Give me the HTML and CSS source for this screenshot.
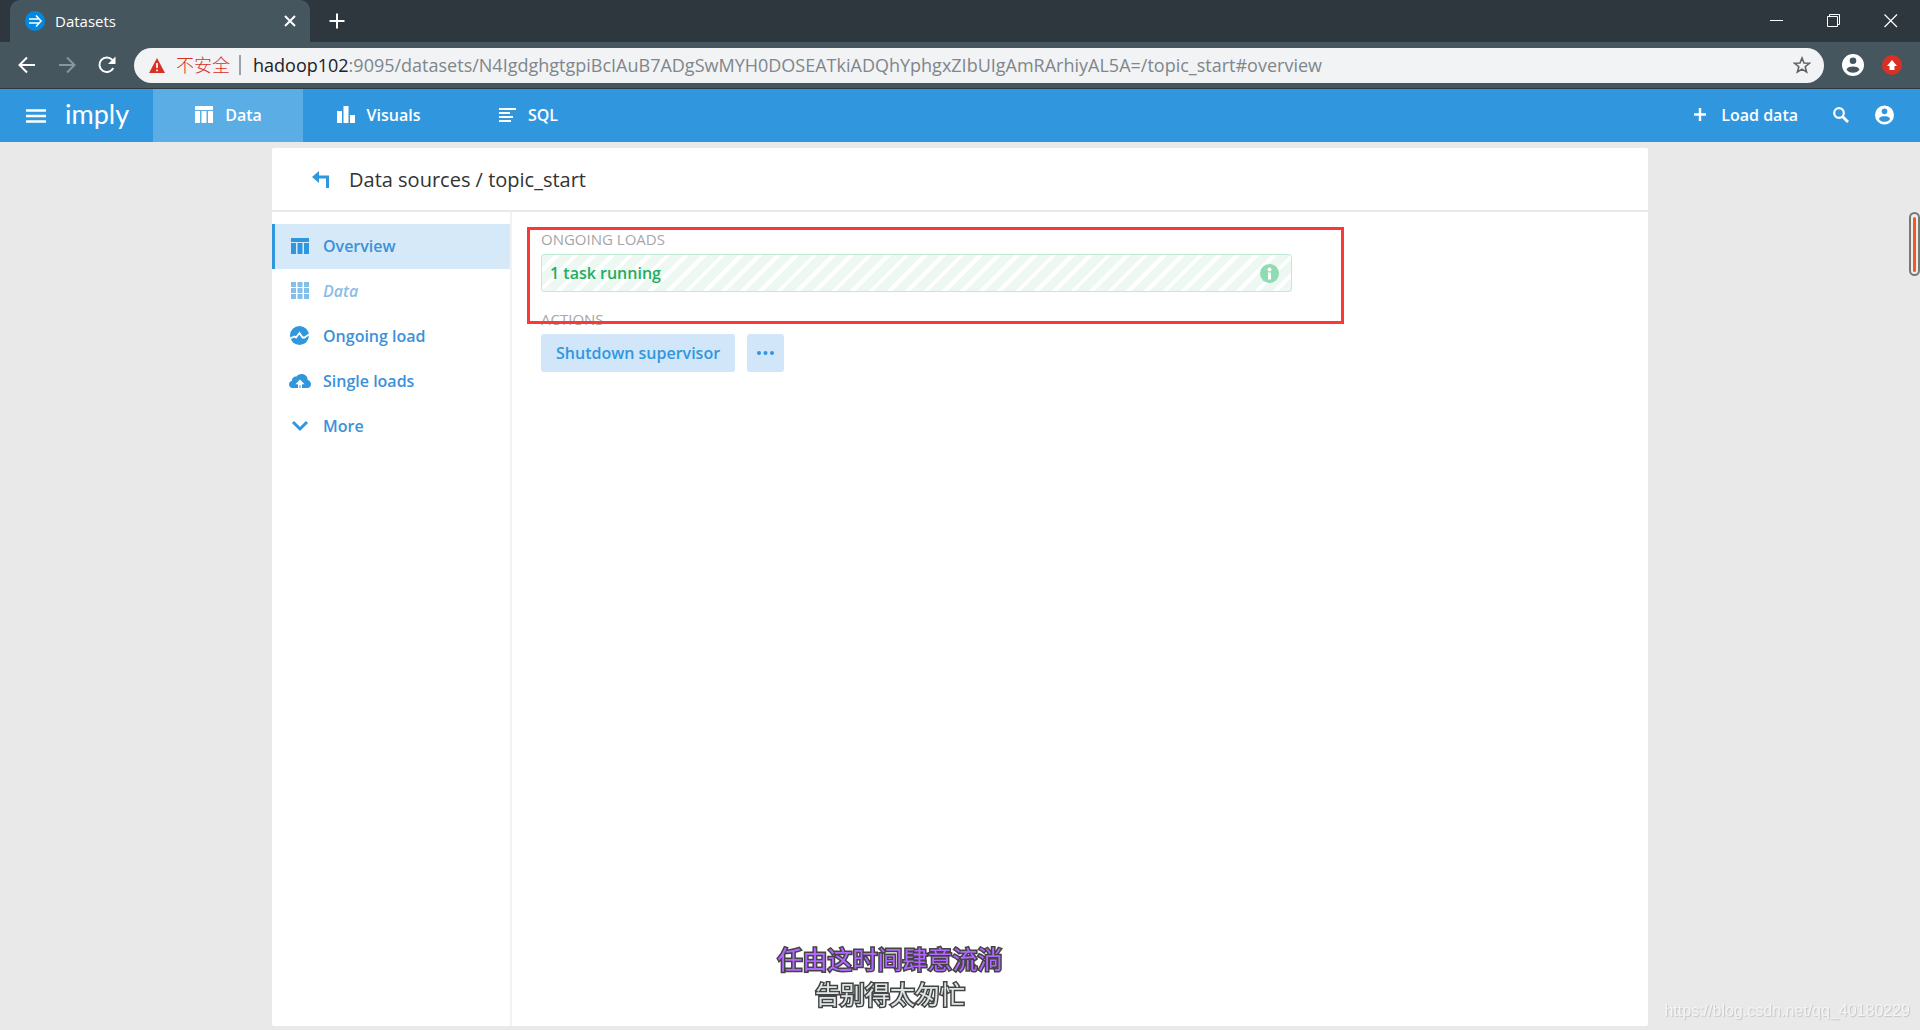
FILE: index.html
```html
<!DOCTYPE html>
<html lang="en">
<head>
<meta charset="utf-8">
<meta name="viewport" content="width=device-width, initial-scale=1">
<title>Datasets</title>
<link rel="stylesheet" href="styles.css">
</head>
<body>
<div class="browser">
  <div class="tab-strip">
    <div class="tab">
      <svg class="favicon" viewBox="0 0 20 20"><circle cx="10" cy="10" r="10" fill="#0288e0"/><path d="M4 8h10M4 12h10M11 4.500l5 5.500-5 5.500" fill="none" stroke="#fff" stroke-width="1.600"/></svg>
      <span class="tab-title">Datasets</span>
      <button class="plain tab-close" aria-label="Close tab"><svg width="12" height="12" viewBox="0 0 12 12"><path d="M1 1l10 10M11 1L1 11" stroke="#fff" stroke-width="2"/></svg></button>
    </div>
    <button class="plain new-tab" aria-label="New tab"><svg width="16" height="16" viewBox="0 0 16 16"><path d="M8 0.500v15M0.500 8h15" stroke="#fff" stroke-width="2"/></svg></button>
    <div class="window-controls">
      <button class="plain" aria-label="Minimize"><svg width="14" height="14" viewBox="0 0 14 14"><path d="M0 6.500h13" stroke="#fff"/></svg></button>
      <button class="plain" aria-label="Restore"><svg width="14" height="14" viewBox="0 0 14 14" fill="none" stroke="#fff"><path d="M.5 2.500h10v10H.5zM2.500 2.500v-2h10v10h-2"/></svg></button>
      <button class="plain" aria-label="Close"><svg width="14" height="14" viewBox="0 0 14 14"><path d="M.5 .5l12.500 12.500M13 .5L.5 13" stroke="#fff" stroke-width="1.200"/></svg></button>
    </div>
  </div>
  <div class="toolbar">
    <div class="history">
      <button class="plain" aria-label="Back"><svg width="18" height="18" viewBox="0 0 18 18"><path d="M17 9H2M9 1.500L1.500 9 9 16.500" fill="none" stroke="#fff" stroke-width="2"/></svg></button>
      <button class="plain" aria-label="Forward"><svg width="18" height="18" viewBox="0 0 18 18"><path d="M1 9h15M9 1.500L16.500 9 9 16.500" fill="none" stroke="#8a969c" stroke-width="2"/></svg></button>
      <button class="plain" aria-label="Reload"><svg width="18" height="18" viewBox="0 0 18 18"><path d="M15.300 12A7.300 7.300 0 1 1 14.300 3.900L16 5.500" fill="none" stroke="#fff" stroke-width="2"/><path d="M17.500 0.500V8H10z" fill="#fff"/></svg></button>
    </div>
    <form class="address">
      <svg width="16" height="15" viewBox="0 0 16 15"><path d="M8 0l8 15H0z" fill="#d93025"/><path d="M8 5v5M8 11.500v1.800" stroke="#fff" stroke-width="1.700"/></svg>
      <span class="insecure">不安全</span>
      <label class="host" for="url">hadoop102</label>
      <input class="url" id="url" type="text" value=":9095/datasets/N4IgdghgtgpiBcIAuB7ADgSwMYH0DOSEATkiADQhYphgxZIbUIgAmRArhiyAL5A=/topic_start#overview">
      <button type="button" class="plain" aria-label="Bookmark"><svg width="18" height="18" viewBox="0 0 18 18"><path d="M9 2l2 5 5.300.3-4.100 3.400 1.400 5.300L9 13.100 4.400 16l1.400-5.300L1.700 7.300 7 7z" fill="none" stroke="#5f6368" stroke-width="1.600"/></svg></button>
    </form>
    <button class="plain" aria-label="Profile"><svg class="icon-profile" viewBox="0 0 22 22"><path fill="#fff" fill-rule="evenodd" d="M11 0a11 11 0 1 1 0 22 11 11 0 0 1 0-22zm0 3.500a3.300 3.300 0 1 0 0 6.600 3.300 3.300 0 0 0 0-6.600zM4.500 15.500c1.500 2.300 3.800 3.300 6.500 3.300s5-1 6.500-3.300c-1-2.400-3.800-3-6.500-3s-5.500.6-6.500 3z"/></svg></button>
    <button class="plain" aria-label="Update available"><svg width="20" height="20" viewBox="0 0 20 20"><circle cx="10" cy="10" r="10" fill="#d93025"/><path d="M10 5l5 6h-2.500v4h-5v-4H5z" fill="#fff"/></svg></button>
  </div>
</div>

<header class="app-bar">
  <button class="plain menu" aria-label="Menu"><svg width="20" height="14" viewBox="0 0 20 14"><path d="M0 1.500h20M0 7h20M0 12.500h20" stroke="#fff" stroke-width="2.500"/></svg></button>
  <a class="logo" href="#">imply</a>
  <nav class="app-tabs">
    <a class="app-tab app-tab-active" href="#"><svg width="18" height="17" viewBox="0 0 18 17" fill="#fff"><path d="M0 0h18v4H0zM0 5h5v12H0zM6.500 5h5v12h-5zM13 5h5v12h-5z"/></svg>Data</a>
    <a class="app-tab" href="#"><svg width="18" height="17" viewBox="0 0 18 17" fill="#fff"><path d="M0 5h5v12H0zM6.500 0h5v17h-5zM13 9h5v8h-5z"/></svg>Visuals</a>
    <a class="app-tab" href="#"><svg width="17" height="14" viewBox="0 0 17 14"><path d="M0 1h17M0 5h11M0 9h14M0 13h12" stroke="#fff" stroke-width="2"/></svg>SQL</a>
  </nav>
  <div class="app-actions">
    <button class="plain load"><svg width="12" height="13" viewBox="0 0 12 13"><path d="M6 0v13M0 6.500h12" stroke="#fff" stroke-width="2.400"/></svg>Load data</button>
    <button class="plain" aria-label="Search"><svg width="16" height="16" viewBox="0 0 16 16" fill="none" stroke="#fff"><circle cx="6" cy="6" r="4.800" stroke-width="2.200"/><path d="M9.500 9.500l5.500 5.500" stroke-width="2.800"/></svg></button>
    <button class="plain" aria-label="Account"><svg width="19" height="20" viewBox="0 0 22 22"><path fill="#fff" fill-rule="evenodd" d="M11 0a11 11 0 1 1 0 22 11 11 0 0 1 0-22zm0 3.500a3.300 3.300 0 1 0 0 6.600 3.300 3.300 0 0 0 0-6.600zM4.500 15.500c1.500 2.300 3.800 3.300 6.500 3.300s5-1 6.500-3.300c-1-2.400-3.800-3-6.500-3s-5.500.6-6.500 3z"/></svg></button>
  </div>
</header>

<div class="card">
  <div class="card-head">
    <a class="back" href="#" aria-label="Back to data sources"><svg width="18" height="17" viewBox="0 0 18 17"><path d="M7 0v12L0 6z" fill="#3097df"/><path d="M5 6h10.500v11" fill="none" stroke="#3097df" stroke-width="3"/></svg></a>
    <h1 class="title">Data sources / topic_start</h1>
  </div>
  <div class="card-body">
    <nav class="side">
      <a class="side-item side-active" href="#overview"><span class="side-icon"><svg width="18" height="16" viewBox="0 0 18 16" fill="#3097df"><path d="M0 0h18v4H0zM0 5h5v11H0zM6.500 5h5v11h-5zM13 5h5v11h-5z"/></svg></span>Overview</a>
      <a class="side-item side-muted" href="#data"><span class="side-icon"><svg width="18" height="17" viewBox="0 0 18 17" fill="#3097df"><path d="M0 0h5v5H0zM6.500 0h5v5h-5zM13 0h5v5h-5zM0 6h5v5H0zM6.500 6h5v5h-5zM13 6h5v5h-5zM0 12h5v5H0zM6.500 12h5v5h-5zM13 12h5v5h-5z"/></svg></span>Data</a>
      <a class="side-item" href="#ongoing"><span class="side-icon"><svg width="19" height="19" viewBox="0 0 19 19"><circle cx="9.500" cy="9.500" r="9.500" fill="#3097df"/><path d="M0 12.500l4.500-2 1.500 1L9.500 7l3 4.500 2 0 4.500-3" fill="none" stroke="#fff" stroke-width="1.800"/></svg></span>Ongoing load</a>
      <a class="side-item" href="#single"><span class="side-icon side-icon-wide"><svg width="22" height="14" viewBox="0 0 22 14"><path d="M3.500 14C1.300 14 0 12.300 0 10.500 0 8.500 1.300 7 3 6.800 2.800 4 5 2.200 7.500 2.600 8.500 1 10.300 0 12.500 0 16 0 18.700 2.500 18.700 6c2 .6 3.300 2 3.300 4.200 0 2.200-1.500 3.800-3.700 3.800z" fill="#3097df"/><path d="M11 5.500l4.500 4.700h-2.500V14H9v-3.800H6.500z" fill="#fff"/><path d="M11 11v3" stroke="#3097df"/></svg></span>Single loads</a>
      <a class="side-item" href="#more"><span class="side-icon"><svg width="18" height="12" viewBox="0 0 18 12"><path d="M2 2l7 7 7-7" fill="none" stroke="#3097df" stroke-width="3"/></svg></span>More</a>
    </nav>
    <main class="main">
      <h2 class="label">ONGOING LOADS</h2>
      <div class="task"><span>1 task running</span><button class="plain" aria-label="Task details"><svg width="19" height="19" viewBox="0 0 19 19"><circle cx="9.500" cy="9.500" r="9.500" fill="#8fdcb2"/><circle cx="9.500" cy="5.500" r="1.900" fill="#fff"/><path d="M7.500 8.500h3.500v7H8v-6" fill="#fff"/></svg></button></div>
      <h2 class="label">ACTIONS</h2>
      <div class="actions">
        <button class="action">Shutdown supervisor</button>
        <button class="action action-more" aria-label="More actions"><svg width="17" height="4" viewBox="0 0 17 4" fill="#3097df"><circle cx="2" cy="2" r="2"/><circle cx="8.500" cy="2" r="2"/><circle cx="15" cy="2" r="2"/></svg></button>
      </div>
      <div class="highlight"></div>
    </main>
  </div>
</div>

<div class="lyrics"><p class="lyric lyric-now">任由这时间肆意流淌</p><p class="lyric lyric-next">告别得太匆忙</p></div>
<div class="watermark">https://blog.csdn.net/qq_40180229</div>
<div class="meter"><div class="meter-fill"></div></div>
</body>
</html>
```

FILE: styles.css
```css
* { box-sizing: border-box; }

body {
  margin: 0;
  min-height: 100vh;
  display: flex;
  flex-direction: column;
  background: #e9e9e9;
  color: #333;
  font-family: "Open Sans", "Noto Sans CJK SC", sans-serif;
  font-size: 16px;
}

svg { display: block; flex: none; }
a { color: inherit; text-decoration: none; }
h1, h2, p { margin: 0; font-weight: 400; }

.plain {
  padding: 0;
  border: 0;
  background: none;
  color: inherit;
  font: inherit;
  cursor: pointer;
}

/* Browser window */
.browser { background: #45565f; border-bottom: 1px solid #2d383e; }
.tab-strip {
  display: flex;
  align-items: center;
  height: 42px;
  padding-left: 10px;
  background: #2d373d;
  color: #fff;
}
.tab {
  display: flex;
  align-items: center;
  gap: 10px;
  width: 300px;
  height: 42px;
  padding: 0 14px 0 15px;
  border-radius: 10px 10px 0 0;
  background: #45565f;
}
.favicon { width: 20px; height: 20px; }
.tab-title { flex: 1; font-size: 15px; }
.new-tab { margin-left: 19px; }
.window-controls { display: flex; gap: 43px; margin-left: auto; padding-right: 22px; }

.toolbar {
  display: flex;
  align-items: center;
  gap: 18px;
  height: 46px;
  padding: 0 18px;
}
.history { display: flex; gap: 22px; }
.address {
  flex: 1;
  display: flex;
  align-items: center;
  height: 35px;
  padding: 0 13px 0 15px;
  border-radius: 18px;
  background: #f1f3f4;
  font-family: "Open Sans", "Noto Sans CJK SC", sans-serif;
  font-size: 18px;
  line-height: 24px;
}
.insecure {
  margin: 0 12px 0 11px;
  padding-right: 9px;
  border-right: 2px solid #9aa0a6;
  color: #d93025;
  font-weight: 300;
  line-height: 20px;
}
.host { color: #202124; }
.url {
  flex: 1;
  min-width: 0;
  padding: 0;
  border: 0;
  outline: 0;
  background: none;
  color: #80868b;
  font: inherit;
}
.icon-profile { width: 22px; height: 22px; }

/* Application bar */
.app-bar {
  display: flex;
  align-items: center;
  height: 53px;
  padding: 0 26px;
  background: #3097df;
  color: #fff;
  font-weight: 600;
}
.logo {
  width: 88px;
  margin-left: 19px;
  padding-bottom: 3px;
  font-family: Lato, sans-serif;
  font-size: 27px;
  font-weight: 400;
  line-height: 32px;
}
.app-tabs { display: flex; height: 100%; }
.app-tab {
  display: flex;
  align-items: center;
  justify-content: center;
  gap: 12px;
  width: 150px;
  padding: 0 0 2px 1px;
}
.app-tab-active { background: #5aade5; }
.app-actions {
  display: flex;
  align-items: center;
  gap: 26px;
  margin-left: auto;
  padding-bottom: 2px;
}
.load { display: flex; align-items: center; gap: 15px; margin-right: 9px; }

/* Data source card */
.card {
  flex: 1;
  display: flex;
  flex-direction: column;
  width: calc(100% - 32px);
  max-width: 1376px;
  margin: 6px auto 4px;
  border-radius: 2px;
  background: #fff;
}
.card-head {
  display: flex;
  align-items: center;
  gap: 19px;
  height: 64px;
  padding: 2px 0 0 40px;
  border-bottom: 2px solid #e9e9e9;
}
.back { padding-bottom: 2px; }
.title { font-size: 20px; line-height: 28px; }
.card-body { flex: 1; display: flex; }
.side {
  width: 240px;
  padding-top: 12px;
  border-right: 2px solid #f2f2f2;
}
.side-item {
  display: flex;
  align-items: center;
  height: 45px;
  padding: 0 0 2px 15px;
  border-left: 3px solid transparent;
  color: #3c91d9;
  font-weight: 600;
}
.side-icon { display: flex; justify-content: center; width: 19px; margin-right: 14px; }
.side-active { border-color: #3097df; background: #d6e9f8; }
.side-muted { font-style: italic; opacity: 0.6; }

.main { position: relative; flex: 1; padding: 16px 29px; }
.label { color: #a6a6a6; font-size: 15px; line-height: 22px; }
.task {
  display: flex;
  align-items: center;
  justify-content: space-between;
  max-width: 751px;
  height: 38px;
  margin: 4px 0 16px;
  padding: 0 12px 0 8px;
  border: 1px solid #c2e9d4;
  border-radius: 3px;
  background: repeating-linear-gradient(135deg, #edf8f2 0 9px, #fff 9px 13px);
  color: #1fae5e;
  font-weight: 600;
}
.actions { display: flex; gap: 12px; margin-top: 4px; }
.action {
  display: flex;
  align-items: center;
  justify-content: center;
  height: 38px;
  padding: 0 15px;
  border: 0;
  border-radius: 3px;
  background: #d1e6f8;
  color: #3097df;
  font: inherit;
  font-weight: 600;
}
.action-more { padding: 0 10px; }

/* Annotation frame over the ongoing loads block */
.highlight {
  position: absolute;
  top: 15px;
  left: 15px;
  width: 817px;
  height: 97px;
  border: 3px solid #fb3838;
  pointer-events: none;
}

/* Desktop overlays */
.lyrics {
  position: fixed;
  bottom: 19px;
  left: 0;
  width: 1780px;
  max-width: 93%;
  font-family: "Noto Sans CJK SC", sans-serif;
  font-size: 25px;
  line-height: 35px;
  text-align: center;
  pointer-events: none;
}
.lyric { -webkit-text-stroke: 3px #444; paint-order: stroke fill; }
.lyric-now { color: #b266ff; }
.lyric-next { color: #dce6e6; }
.watermark {
  position: fixed;
  right: 10px;
  bottom: 8px;
  color: #f4f4f4;
  font-family: "Liberation Sans", sans-serif;
  font-size: 16px;
  line-height: 22px;
  text-shadow: 1px 1px 1px #c4c4c4;
}
.meter {
  position: fixed;
  top: 212px;
  right: 0;
  width: 11px;
  height: 64px;
  padding: 3px 2px 2px;
  border: 2px solid #777;
  border-radius: 6px;
  background: #eee;
}
.meter-fill { height: 100%; border-radius: 2px; background: #f4581e; }
```
